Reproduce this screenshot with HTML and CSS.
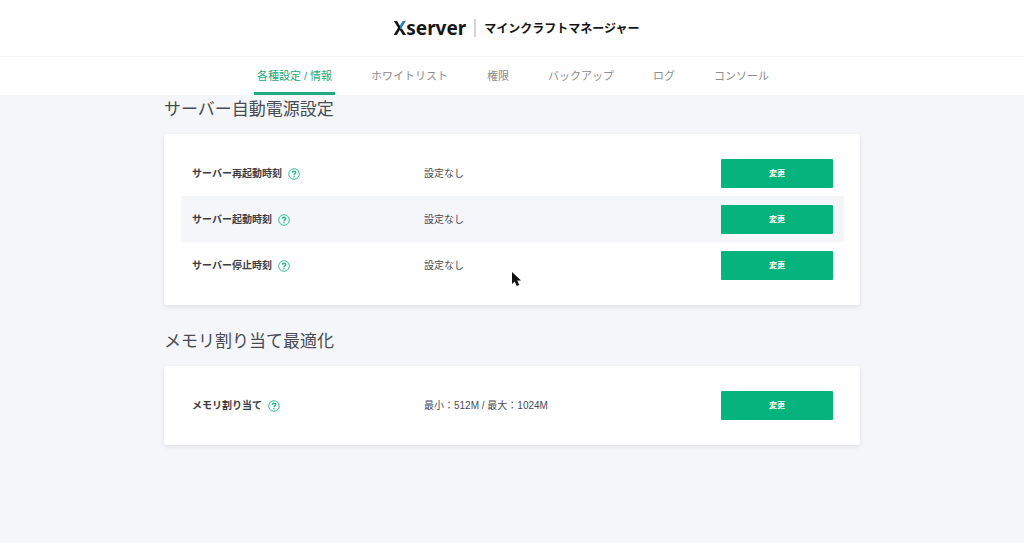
FILE: index.html
```html
<!DOCTYPE html>
<html lang="ja">

<head>
    <meta charset="UTF-8">
    <meta name="viewport" content="width=device-width, initial-scale=1.0">
    <title>Xserver マインクラフトマネージャー</title>
    <link rel="stylesheet" href="styles.css">
</head>

<body>
    <header class="header">
        <span class="logo"><span class="logo-x">X</span>server</span>
        <h1 class="title">マインクラフトマネージャー</h1>
    </header>

    <nav class="nav">
        <a class="active" href="#">各種設定 / 情報</a>
        <a href="#">ホワイトリスト</a>
        <a href="#">権限</a>
        <a href="#">バックアップ</a>
        <a href="#">ログ</a>
        <a href="#">コンソール</a>
    </nav>

    <!-- help icon, used in every row -->
    <svg class="symbols" aria-hidden="true">
        <symbol id="help" viewBox="0 0 12 12">
            <circle cx="6" cy="6" r="5.3" fill="none" stroke="currentColor" stroke-width="0.9" />
            <path d="M4.4 4.8C4.4 2.7 7.7 2.8 7.7 4.6C7.7 5.8 6 5.8 6 7.2" fill="none" stroke="currentColor" stroke-width="1.4" />
            <circle cx="6" cy="8.8" r="0.8" fill="currentColor" />
        </symbol>
    </svg>

    <main class="main">
        <h2>サーバー自動電源設定</h2>
        <div class="card">
            <table>
                <tr>
                    <th scope="row">サーバー再起動時刻<svg class="help"><use href="#help" /></svg></th>
                    <td>設定なし</td>
                    <td class="action"><button type="button">変更</button></td>
                </tr>
                <tr>
                    <th scope="row">サーバー起動時刻<svg class="help"><use href="#help" /></svg></th>
                    <td>設定なし</td>
                    <td class="action"><button type="button">変更</button></td>
                </tr>
                <tr>
                    <th scope="row">サーバー停止時刻<svg class="help"><use href="#help" /></svg></th>
                    <td>設定なし</td>
                    <td class="action"><button type="button">変更</button></td>
                </tr>
            </table>
        </div>

        <h2>メモリ割り当て最適化</h2>
        <div class="card">
            <table>
                <tr>
                    <th scope="row">メモリ割り当て<svg class="help"><use href="#help" /></svg></th>
                    <td>最小：512M / 最大：1024M</td>
                    <td class="action"><button type="button">変更</button></td>
                </tr>
            </table>
        </div>
    </main>

    <!-- mouse pointer -->
    <svg class="pointer" viewBox="0 0 11 16" aria-hidden="true">
        <path d="M1 1V13L3.7 10.5L5.8 15L8.2 13.9L6.2 9.6H10Z" fill="#111" />
    </svg>
</body>

</html>
```

FILE: styles.css
```css
* {
    box-sizing: border-box;
}

body {
    margin: 0;
    background-color: #f5f6fa;
    color: #484b52;
    font-family: "Liberation Sans", "Noto Sans CJK JP", sans-serif;
    font-size: 10px;
}

/* header */

.header {
    display: flex;
    align-items: center;
    justify-content: center;
    height: 57px;
    padding-left: 9px;
    background-color: #fff;
    border-bottom: 1px solid #f5f5f0;
    color: #151515;
}

.logo {
    font-family: "Noto Sans", sans-serif;
    font-size: 19px;
    font-weight: 700;
    line-height: 20px;
}

/* upper right arm of the X is blue */
.logo-x {
    background: conic-gradient(from 0deg at 50% 55%, #2a7fb8 0 90deg, #151515 0);
    background-clip: text;
    -webkit-background-clip: text;
    color: transparent;
}

.title {
    margin: 0 0 0 8px;
    padding: 2px 0 0 8px;
    border-left: 2px solid #d5d5d5;
    font-size: 12px;
    font-weight: 700;
    line-height: 16px;
}

/* tabs */

.nav {
    display: flex;
    justify-content: center;
    gap: 33px;
    height: 38px;
    padding-left: 2px;
    background-color: #fff;
}

.nav a {
    padding: 0 3px;
    border-bottom: 3px solid transparent;
    color: #8c8c8c;
    font-size: 11px;
    line-height: 38px;
    text-decoration: none;
}

.nav a.active {
    border-bottom-color: #22ab80;
    color: #22ab80;
}

/* content */

.main {
    max-width: 696px;
    margin: 0 auto;
    padding-top: 1px;
}

h2 {
    margin: 0 0 10px;
    font-size: 17px;
    font-weight: 400;
    line-height: 28px;
}

.card {
    margin-bottom: 23px;
    padding: 16px 16px 17px 17px;
    background-color: #fff;
    border-radius: 3px;
    box-shadow: 0 2px 5px rgba(0, 0, 0, 0.08);
}

table {
    width: 100%;
    border-collapse: collapse;
}

tr:nth-child(even) {
    background-color: #f5f6fa;
}

th,
td {
    height: 46px;
    padding: 0;
    text-align: left;
    vertical-align: middle;
}

th {
    width: 243px;
    padding-left: 11px;
    color: #3a3d45;
}

td {
    padding-bottom: 1px;
}

.action {
    width: 123px;
    padding-right: 11px;
    padding-bottom: 0;
}

button {
    display: block;
    width: 100%;
    height: 29px;
    padding: 0 0 2px;
    background-color: #05b37d;
    border: none;
    border-radius: 1px;
    color: #fff;
    font-family: inherit;
    font-size: 8px;
    font-weight: 700;
    cursor: pointer;
}

.help {
    width: 12px;
    height: 12px;
    margin: 0 0 1px 6px;
    color: #22b888;
    vertical-align: middle;
}

.symbols {
    display: none;
}

.pointer {
    position: absolute;
    top: 271px;
    left: 511px;
    width: 11px;
    height: 16px;
}
```
